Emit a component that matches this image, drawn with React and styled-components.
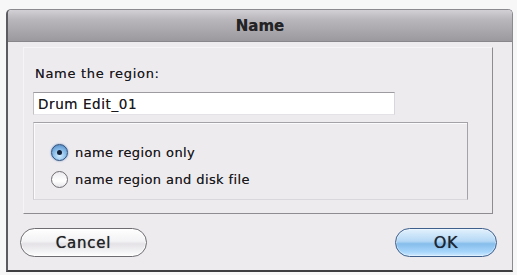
import React from 'react';
import styled, { createGlobalStyle } from 'styled-components';

const GlobalStyle = createGlobalStyle`
  html, body {
    margin: 0;
    padding: 0;
    background: #f7f7f8;
  }
  body {
    font-family: "DejaVu Sans", "Liberation Sans", sans-serif;
    color: #19181b;
    text-shadow: 0 0 0.6px rgba(20, 20, 24, 0.6);
  }
`

const Window = styled.div`
  box-sizing: border-box;
  width: 507px;
  margin: 9px 0 0 6px;
  background: #eeebef;
  border: 1px solid #8c8a8e;
  border-left: 2px solid #5c5b5f;
  border-bottom: 2px solid #3f3e41;
  border-radius: 5px 5px 0 0;
  display: flex;
  flex-direction: column;
  padding-bottom: 13px;
`

const TitleBar = styled.div`
  height: 31px;
  border-bottom: 1px solid #88868a;
  border-radius: 4px 4px 0 0;
  background: linear-gradient(#d2d0d4 0%, #b9b7bb 30%, #aaa8ac 65%, #9b999e 100%);
  display: flex;
  align-items: center;
  justify-content: center;
  font-size: 15px;
  font-weight: bold;
  color: #242326;
`

const Panel = styled.div`
  margin: 5px 19px 0 15px;
  padding: 18px 24px 13px 9px;
  border-top: 1px solid #f6f4f7;
  border-left: 1px solid #f6f4f7;
  border-right: 1px solid #8e8c90;
  border-bottom: 1px solid #8e8c90;
  display: flex;
  flex-direction: column;
`

const Label = styled.div`
  font-size: 13px;
  line-height: 16px;
  letter-spacing: 0.7px;
  padding-left: 2px;
`

const NameInput = styled.div`
  box-sizing: border-box;
  margin-top: 10px;
  width: 362px;
  height: 23px;
  background: #fff;
  border-top: 1px solid #9d9b9f;
  border-left: 1px solid #c3c1c5;
  border-right: 1px solid #d8d6da;
  border-bottom: 1px solid #e4e2e6;
  padding-left: 4px;
  display: flex;
  align-items: center;
  font-size: 13.5px;
  letter-spacing: 0.6px;
`

const GroupBox = styled.div`
  box-sizing: border-box;
  margin-top: 7px;
  width: 435px;
  height: 78px;
  border-top: 1px solid #a4a2a6;
  border-right: 1px solid #a4a2a6;
  border-left: 1px solid #cfcdd1;
  border-bottom: 1px solid #d9d7db;
  box-shadow: inset 1px 1px 0 #fbfafc;
  padding: 20px 0 0 17px;
  display: flex;
  flex-direction: column;
  gap: 9px;
`

const RadioRow = styled.label`
  display: flex;
  align-items: center;
  gap: 7px;
  height: 18px;
  font-size: 13px;
  letter-spacing: 0.4px;
`

const RadioDot = styled.span`
  box-sizing: border-box;
  width: 17px;
  height: 17px;
  border-radius: 50%;
  display: flex;
  align-items: center;
  justify-content: center;
  border: 1px solid ${p => (p.checked ? '#2f4f7a' : '#6f6d72')};
  background: ${p =>
    p.checked
      ? 'radial-gradient(circle at 50% 72%, #d2ecff 0%, #86bbe8 50%, #4a7fbd 100%)'
      : 'linear-gradient(#eceaee, #ffffff 60%, #e6e4e8)'};
  box-shadow: ${p => (p.checked ? '0 0 2px #5f8fc7' : 'none')};

  &::after {
    content: '';
    width: 5px;
    height: 5px;
    border-radius: 50%;
    background: #14213a;
    display: ${p => (p.checked ? 'block' : 'none')};
  }
`

const ButtonRow = styled.div`
  margin: 14px 15px 0 12px;
  display: flex;
  justify-content: space-between;
`

const PillButton = styled.button`
  box-sizing: border-box;
  width: ${p => p.$width}px;
  height: 29px;
  border-radius: 15px;
  font-family: "DejaVu Sans", "Liberation Sans", sans-serif;
  font-size: ${p => (p.$primary ? 16 : 15)}px;
  letter-spacing: 0.8px;
  color: ${p => (p.$primary ? '#1c2433' : '#232226')};
  text-shadow: 0 0 0.7px rgba(20, 20, 24, 0.7);
  cursor: default;
  border: 1px solid ${p => (p.$primary ? '#3e5f8c' : '#6e6c71')};
  background: ${p =>
    p.$primary
      ? 'linear-gradient(#e2f1fd 0%, #b5d8f5 45%, #86bdeb 55%, #a8d6fb 85%, #cfeaff 100%)'
      : 'linear-gradient(#ffffff 0%, #f3f2f4 45%, #e4e2e6 55%, #f4f3f5 85%, #ffffff 100%)'};
  box-shadow: inset 0 0 0 1px ${p => (p.$primary ? 'rgba(255,255,255,0.35)' : 'rgba(255,255,255,0.6)')};
  padding: 0;
`

export default function App() {
  return (
    <>
      <GlobalStyle />
      <Window>
        <TitleBar>Name</TitleBar>
        <Panel>
          <Label>Name the region:</Label>
          <NameInput>Drum Edit_01</NameInput>
          <GroupBox>
            <RadioRow>
              <RadioDot checked />
              name region only
            </RadioRow>
            <RadioRow>
              <RadioDot />
              name region and disk file
            </RadioRow>
          </GroupBox>
        </Panel>
        <ButtonRow>
          <PillButton $width={127}>Cancel</PillButton>
          <PillButton $width={102} $primary>OK</PillButton>
        </ButtonRow>
      </Window>
    </>
  );
}
